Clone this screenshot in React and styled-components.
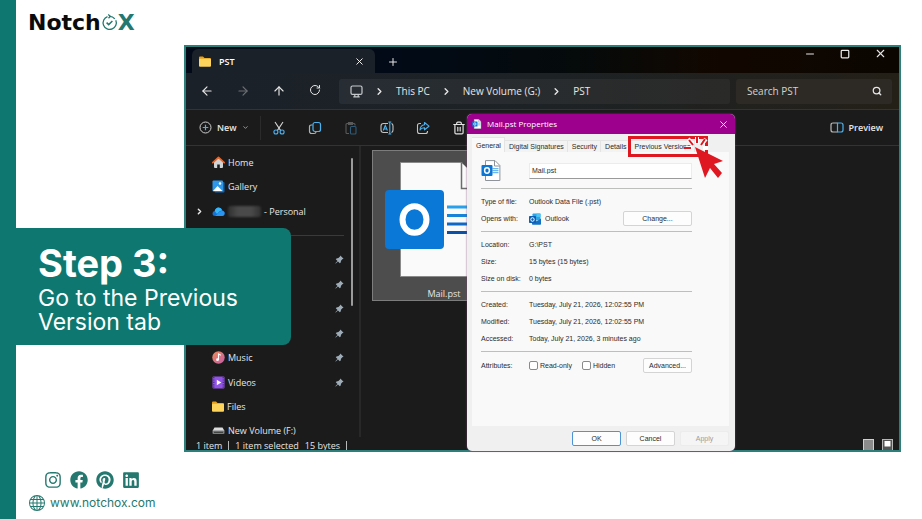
import styled, { createGlobalStyle, ThemeProvider } from 'styled-components'
import { ArrowLeft, ArrowRight, ArrowUp, RotateCw, X, Plus, Minus, Square, Search, ChevronRight, ChevronDown, Trash2 } from 'lucide-react'
import { FaInstagram, FaFacebook, FaPinterest, FaLinkedin } from 'react-icons/fa'
import { BsGlobe } from 'react-icons/bs'

const GlobalStyle = createGlobalStyle`
  * {
    box-sizing: border-box;
  }
  body {
    margin: 0;
    background-color: white;
  }
  button, input {
    font: inherit;
    color: inherit;
  }
  button {
    background: none;
    border: none;
    padding: 0;
  }
  svg {
    display: block;
    flex: none;
  }
`

const theme = {
  brand: '#0e776f',
  brandSoft: '#25786f',
  winBg: '#1b1b1b',
  winLine: '#323334',
  winText: '#e6e6e6',
  blue: '#4cb2ef',
  panel: '#f9f9f9',
  dialogText: '#2b2b2b',
  highlight: '#df1720',
  uiFont: '"Open Sans", "Noto Sans", sans-serif',
  dialogFont: '"Liberation Sans", Arial, sans-serif',
  brandFont: '"Inter", "Open Sans", sans-serif',
}

const Page = styled.div`
  min-height: 100vh;
  border-left: 16px solid ${props => props.theme.brand};
  font-family: ${props => props.theme.brandFont};
`;

const Header = styled.header`
  display: flex;
  align-items: center;
  height: 45px;
  padding-left: 12px;
`;

const Logo = styled.a`
  display: flex;
  align-items: center;
  font-family: "DejaVu Sans", sans-serif;
  font-size: 22px;
  line-height: 20px;
  font-weight: 700;
  color: #0b0b0b;
  text-decoration: none;
`;

const LogoAccent = styled.span`
  color: ${props => props.theme.brandSoft};
`;

const Stage = styled.main`
  position: relative;
  padding: 0 21px 0 168px;
`;

const Callout = styled.section`
  position: absolute;
  top: 183px;
  left: 0;
  width: 275px;
  padding: 12px 21px 11px 22px;
  border-radius: 0 8px 8px 0;
  background-color: ${props => props.theme.brand};
  color: white;
`;

const CalloutTitle = styled.h1`
  margin: 0;
  font-size: 38px;
  line-height: 46px;
  font-weight: 700;
`;

const CalloutText = styled.p`
  margin: 0;
  font-size: 23px;
  line-height: 24px;
`;

const Window = styled.section`
  position: relative;
  border: 2px solid #2c807b;
  background-color: ${props => props.theme.winBg};
  color: ${props => props.theme.winText};
  font-family: ${props => props.theme.uiFont};
  font-size: 9px;
`;

const TitleBar = styled.div`
  display: flex;
  align-items: flex-end;
  height: 26px;
  padding-left: 6px;
  background: linear-gradient(90deg, #020a19 0%, #020a17 30%, #050a0a 55%, #120700 75%, #0b0600 100%);
`;

const WindowTab = styled.div`
  display: flex;
  align-items: center;
  gap: 8px;
  width: 183px;
  height: 24px;
  padding: 0 10px 0 7px;
  border-radius: 6px 6px 0 0;
  background-color: #1b2129;
  font-weight: 600;
  color: white;
  button {
    margin-left: auto;
  }
`;

const NewTab = styled.button`
  align-self: center;
  padding: 4px 12px 0;
`;

const WindowControls = styled.div`
  display: flex;
  align-self: flex-start;
  gap: 24px;
  margin-left: auto;
  padding: 0 12px 0 0;
`;

const NavBar = styled.nav`
  display: flex;
  align-items: center;
  gap: 6px;
  height: 37px;
  padding: 0 7px 0 3px;
  border-bottom: 1px solid ${props => props.theme.winLine};
  background: linear-gradient(90deg, #1a2129 0%, #1d2225 50%, #242018 100%);
`;

const NavButtons = styled.div`
  display: flex;
`;

const NavButton = styled.button`
  display: flex;
  justify-content: center;
  width: 36px;
  opacity: ${props => props.disabled ? 0.4 : 1};
`;

const Breadcrumbs = styled.div`
  display: flex;
  align-items: center;
  flex: 1;
  gap: 11px;
  height: 25px;
  padding-left: 11px;
  border-radius: 3px;
  background: linear-gradient(90deg, #272d34, #2a2a28);
  font-size: 10px;
`;

const SearchBox = styled.label`
  display: flex;
  align-items: center;
  width: 156px;
  height: 25px;
  padding: 0 10px 0 11px;
  border-radius: 3px;
  background-color: #2d2a25;
  font-size: 10px;
  input {
    flex: 1;
    min-width: 0;
    padding: 0;
    border: none;
    background: none;
  }
  input::placeholder {
    color: #d2d2d0;
    opacity: 1;
  }
`;

const Toolbar = styled.div`
  display: flex;
  align-items: center;
  height: 36px;
  padding: 0 16px 0 13px;
  border-bottom: 1px solid ${props => props.theme.winLine};
`;

const TextButton = styled.button`
  display: flex;
  align-items: center;
  gap: 5px;
  font-weight: 600;
`;

const ToolDivider = styled.span`
  width: 1px;
  height: 24px;
  margin-left: 11px;
  background-color: #2b2b2b;
`;

const Tools = styled.div`
  display: flex;
  flex: 1;
  gap: 22px;
  padding-left: 11px;
`;

const Body = styled.div`
  display: flex;
  height: 291px;
  overflow: hidden;
`;

const Sidebar = styled.aside`
  display: flex;
  width: 175px;
  border-right: 2px solid #282828;
`;

const Places = styled.ul`
  display: flex;
  flex-direction: column;
  flex: 1;
  height: 293px;
  margin: 4px 0 0;
  padding: 0 7px 0 9px;
  list-style: none;
`;

const Place = styled.li`
  display: flex;
  align-items: center;
  flex: 1;
  gap: 3px;
  > svg:last-child {
    margin-left: auto;
  }
`;

const PlaceArrow = styled.span`
  width: 14px;
`;

const PlaceDivider = styled.li`
  display: flex;
  align-items: center;
  flex: 1;
  &::after {
    content: '';
    flex: 1;
    height: 1px;
    background-color: #3a3a3a;
  }
`;

const Redacted = styled.span`
  width: 33px;
  height: 11px;
  border-radius: 2px;
  background: linear-gradient(90deg, #303030, #4a4a4a 30%, #4a4a4a 70%, #303030);
  filter: blur(1px);
`;

const Scrollbar = styled.div`
  width: 2px;
  height: 148px;
  margin: 12px 6px 0 0;
  border-radius: 1px;
  background-color: #9c9c9c;
`;

const Files = styled.div`
  flex: 1;
  padding: 4px 11px;
`;

const FileTile = styled.figure`
  width: 144px;
  height: 151px;
  margin: 0;
  padding-top: 11px;
  border: 1px solid #7d7d7d;
  background-color: #4d4d4d;
  text-align: center;
  font-size: 9px;
  svg {
    margin-left: 12px;
  }
  figcaption {
    line-height: 14px;
    padding-top: 9px;
  }
`;

const StatusBar = styled.footer`
  display: flex;
  align-items: center;
  height: 13px;
  padding: 3px 6px 0 10px;
  gap: 6px;
  overflow: hidden;
  line-height: 13px;
`;

const StatusDivider = styled.span`
  width: 1px;
  height: 9px;
  background-color: #b8b8b8;
`;

const ViewIcons = styled.span`
  display: flex;
  gap: 8px;
  margin-left: auto;
`;

const Dialog = styled.section`
  position: absolute;
  top: 67px;
  left: 281px;
  width: 268px;
  border-radius: 5px;
  background-color: #f0f0f0;
  box-shadow: 0 0 2px #7a4a78;
  color: ${props => props.theme.dialogText};
  font-family: ${props => props.theme.dialogFont};
  font-size: 7px;
`;

const DialogTitle = styled.header`
  display: flex;
  align-items: center;
  gap: 5px;
  height: 20px;
  padding: 0 6px 0 5px;
  border-radius: 5px 5px 0 0;
  background-color: #9c008c;
  color: white;
  h2 {
    flex: 1;
    margin: 0;
    font-family: ${props => props.theme.uiFont};
    font-size: 8px;
    line-height: 10px;
    font-weight: 400;
  }
`;

const DialogTabs = styled.div`
  display: flex;
  align-items: flex-end;
  height: 18px;
  padding-left: 5px;
`;

const DialogTab = styled.button`
  height: ${props => props.$active ? 15 : 12}px;
  padding: 0 3px 0 4px;
  border: 1px solid #e4e4e4;
  border-width: 1px 1px 0 0;
  background-color: ${props => props.$active ? props.theme.panel : '#f3f3f3'};
  white-space: nowrap;
`;

const Panel = styled.div`
  min-height: 274px;
  margin: 0 6px 0 5px;
  padding: 1px 37px 0 9px;
  background-color: ${props => props.theme.panel};
`;

const Group = styled.div`
  padding: ${props => props.$last ? 5 : 4}px 0 4px;
  border-bottom: ${props => props.$last ? 'none' : '1px solid #bcbfbc'};
`;

const Field = styled.div`
  display: flex;
  align-items: center;
  height: ${props => props.$tall ? 27 : 17}px;
`;

const FieldName = styled.span`
  width: 48px;
`;

const FieldValue = styled.span`
  display: flex;
  align-items: center;
  flex: 1;
  gap: 4px;
`;

const NameInput = styled.input`
  flex: 1;
  min-width: 0;
  height: 16px;
  padding: 0 2px;
  border: 1px solid #ececec;
  border-bottom-color: #9a9a9a;
  background-color: white;
`;

const Check = styled.label`
  display: flex;
  align-items: center;
  gap: 2px;
  margin-right: 10px;
  input {
    appearance: none;
    width: 9px;
    height: 9px;
    margin: 0;
    border: 1px solid #8a8a8a;
    border-radius: 2px;
    background-color: white;
  }
`;

const DialogButton = styled.button`
  width: ${props => props.$wide ? 69 : 49}px;
  height: 15px;
  border: 1px solid ${props => props.$primary ? '#4d94d6' : '#d4d4d4'};
  border-radius: 2px;
  background-color: #fdfdfd;
  &:disabled {
    border-color: #ececec;
    background-color: #f5f5f5;
    color: #9c9c9c;
  }
`;

const DialogFooter = styled.footer`
  display: flex;
  justify-content: flex-end;
  gap: 5px;
  padding: 5px 6px;
`;

const Highlight = styled.div`
  position: absolute;
  top: 22px;
  left: 161px;
  width: 80px;
  height: 21px;
  border: 3px solid ${props => props.theme.highlight};
`;

const Pointer = styled.svg`
  position: absolute;
  top: 21px;
  left: 215px;
`;

const Footer = styled.footer`
  display: flex;
  flex-direction: column;
  gap: 6px;
  padding: 19px 13px 7px;
  color: ${props => props.theme.brandSoft};
`;

const Social = styled.div`
  display: flex;
  gap: 8px;
  padding-left: 15px;
  a {
    color: inherit;
  }
`;

const Website = styled.a`
  display: flex;
  align-items: center;
  gap: 5px;
  color: inherit;
  font-size: 12px;
  line-height: 16px;
  text-decoration: none;
`;

const FolderIcon = () => (
  <svg width="12" height="11" viewBox="0 0 12 11">
    <path d="M0 1.5Q0 .5 1 .5h3l1.5 1.5H11q1 0 1 1V4H0z" fill="#e8a019" />
    <rect y="2.8" width="12" height="8" rx="1" fill="#ffd45c" />
  </svg>
)

const PcIcon = () => (
  <svg width="13" height="13" viewBox="0 0 13 13" fill="none" stroke="#c8cbce" strokeWidth="1.2">
    <rect x="1" y="1" width="11" height="8.4" rx="1.5" />
    <path d="M4.8 9.5v2M8.2 9.5v2M3.3 11.8h6.4" />
  </svg>
)

const AddIcon = () => (
  <svg width="13" height="13" viewBox="0 0 13 13" fill="none">
    <circle cx="6.5" cy="6.5" r="5.5" stroke="#d0d0d0" />
    <path d="M6.5 3.7v5.6M3.7 6.5h5.6" stroke="#4cb2ef" strokeWidth="1.2" />
  </svg>
)

const CutIcon = () => (
  <svg width="14" height="14" viewBox="0 0 14 14" fill="none" strokeWidth="1.1">
    <path d="M3 1l5.7 8.6M11 1L5.3 9.6" stroke="#d6d6d6" />
    <circle cx="3.9" cy="11" r="2" stroke="#4cb2ef" />
    <circle cx="10.1" cy="11" r="2" stroke="#4cb2ef" />
  </svg>
)

const CopyIcon = () => (
  <svg width="14" height="14" viewBox="0 0 14 14" fill="none" strokeWidth="1.2">
    <path d="M4.5 4H3.2Q1.5 4 1.5 5.7v4.6Q1.5 12.5 3.7 12.5H6Q8 12.5 8 11" stroke="#a9b4ba" />
    <rect x="5" y="1.5" width="7.5" height="9" rx="2" stroke="#4cb2ef" />
  </svg>
)

const PasteIcon = () => (
  <svg width="14" height="14" viewBox="0 0 14 14" fill="none" strokeWidth="1.1">
    <path d="M5 12.5H3Q2 12.5 2 11.5V3.5Q2 2.5 3 2.5h7q1 0 1 1V4.5M4.5 2.5V1.5h4v2h-4z" stroke="#5a5a5a" />
    <rect x="6.5" y="5.5" width="5.5" height="7.5" rx="1" stroke="#2f5b78" />
  </svg>
)

const RenameIcon = () => (
  <svg width="14" height="14" viewBox="0 0 14 14" fill="none" strokeWidth="1.1">
    <path d="M8 2.5H3.5Q1 2.5 1 5v4q0 2.5 2.5 2.5H8M11.5 2.5Q13 3 13 5v4q0 2-1.5 2.5" stroke="#c4c4c4" />
    <path d="M9.8 1.5v11M8.3 1h3M8.3 13h3M3.2 9.5L5.3 4.5l2.1 5M3.9 8h2.8" stroke="#4cb2ef" />
  </svg>
)

const ShareIcon = () => (
  <svg width="14" height="14" viewBox="0 0 14 14" fill="none" strokeWidth="1.1" strokeLinejoin="round">
    <path d="M5 2.5H3.5Q1.5 2.5 1.5 4.5v6q0 2 2 2h6q2 0 2-2V10" stroke="#c4c4c4" />
    <path d="M8.5 1.5l4.5 3.7-4.5 3.6V6.7Q5.5 6.5 4 9q.3-4.8 4.5-5.3z" stroke="#4cb2ef" />
  </svg>
)

const PreviewIcon = () => (
  <svg width="14" height="11" viewBox="0 0 14 11" fill="none" strokeWidth="1.2">
    <path d="M7.5 1H3Q1 1 1 3v5q0 2 2 2h4.5" stroke="#b9b9b9" />
    <path d="M7.5 1H11q2 0 2 2v5q0 2-2 2H7.5z" stroke="#4cb2ef" />
  </svg>
)

const HomeIcon = () => (
  <svg width="13" height="13" viewBox="0 0 13 13">
    <path d="M2 6l4.5-4L11 6v5q0 1-1 1H7.8V8.5H5.2V12H3q-1 0-1-1z" fill="#cfd3d6" />
    <path d="M.8 6.6L6.5 1.3l5.7 5.3" fill="none" stroke="#e8672c" strokeWidth="1.7" strokeLinecap="round" strokeLinejoin="round" />
  </svg>
)

const GalleryIcon = () => (
  <svg width="13" height="13" viewBox="0 0 13 13">
    <rect x="2.5" y="2" width="10" height="10.5" rx="1" fill="#1262b3" />
    <rect x=".5" y=".5" width="10.5" height="11" rx="1" fill="#2f97ea" />
    <path d="M1 11l4.5-5L10.5 11z" fill="white" />
    <circle cx="8" cy="3.5" r="1.2" fill="white" />
  </svg>
)

const CloudIcon = () => (
  <svg width="13" height="13" viewBox="0 0 13 13">
    <path d="M3.2 11Q.5 11 .5 8.5.5 6.3 2.7 6 3.5 2.5 6.7 2.5q2.6 0 3.5 2.7Q12.6 5.6 12.6 8.2 12.5 11 9.8 11z" fill="#1272d8" />
    <path d="M2.7 6Q3.5 2.5 6.7 2.5q2.6 0 3.5 2.7Q7.5 5.5 5 9z" fill="#38b5f5" />
    <path d="M3.5 11l4-4q2.5-2 4.9 0 .7 4-2.6 4z" fill="#2a96f2" />
  </svg>
)

const MusicIcon = () => (
  <svg width="13" height="13" viewBox="0 0 13 13">
    <defs>
      <linearGradient id="music" x2="1" y2="1">
        <stop stopColor="#f08a52" />
        <stop offset="1" stopColor="#c45cae" />
      </linearGradient>
    </defs>
    <circle cx="6.5" cy="6.5" r="6.2" fill="url(#music)" />
    <circle cx="5.5" cy="8.7" r="1.4" fill="white" />
    <path d="M6.5 8.7V3l2.3 1.3" fill="none" stroke="white" strokeWidth="1.1" />
  </svg>
)

const VideoIcon = () => (
  <svg width="13" height="13" viewBox="0 0 13 13">
    <rect x=".5" y=".5" width="12" height="12" rx="1" fill="#9153e6" />
    <path d="M1.8 1v11M11.2 1v11" stroke="#4b1f96" strokeWidth="1.2" strokeDasharray="1.2 1.2" />
    <path d="M4.8 3.8v5.4l4.5-2.7z" fill="white" />
  </svg>
)

const DriveIcon = () => (
  <svg width="13" height="13" viewBox="0 0 13 13">
    <path d="M2.5 3.5h8L12.5 7H.5z" fill="#dcdcdc" />
    <rect x=".5" y="6.5" width="12" height="3.5" rx="1" fill="#7b7f80" />
    <rect x="2" y="7.8" width="9" height="1" fill="#333" />
  </svg>
)

const PinIcon = () => (
  <svg width="9" height="9" viewBox="0 0 9 9">
    <path d="M5.3.4l3.3 3.3-1 .4L6 5.7 5.7 7.5l-.9.8L3 6.5.8 8.6.3 8.2 2.5 5.9.8 4.2l.7-.8L3.4 3 5 1.4z" fill="#9fadb8" />
  </svg>
)

const OutlookFile = ({ size }) => (
  <svg width={size} height={size} viewBox="0 0 20 21">
    <path d="M4 .6h9.5L18.4 5.5v15H4z" fill="white" stroke="#8e9499" />
    <path d="M13 .8V6h5.2" fill="none" stroke="#8e9499" />
    <path d="M11 8.7h6M11 10.7h6M11 12.7h6" stroke="#4aa5ea" />
    <rect y="5" width="11" height="11" rx="1" fill="#0b76d4" />
    <ellipse cx="5.500" cy="10.5" rx="2.4" ry="2.700" fill="none" stroke="white" strokeWidth="1.5" />
  </svg>
)

const OutlookApp = () => (
  <svg width="12" height="12" viewBox="0 0 12 12">
    <rect x="3.5" y=".5" width="8" height="7" rx=".8" fill="#2aa5e8" />
    <path d="M7.5.5h4v3.5h-4z" fill="#4cc5f5" />
    <path d="M3 5.5l4.8 2.8L12 5.5v5.5q0 .8-.8.8H3.8Q3 11.8 3 11z" fill="#1270c4" />
    <rect y="3" width="7" height="7" rx=".7" fill="#0b5fb5" />
    <ellipse cx="3.5" cy="6.5" rx="1.7" ry="1.8" fill="none" stroke="white" strokeWidth="1" />
  </svg>
)

const LargeFile = () => (
  <svg width="120" height="116" viewBox="0 0 120 116">
    <path d="M15.5.5H77L104 27.5v87H15.5z" fill="#fafafa" stroke="#8a8a8a" />
    <path d="M76.5.5v26h27" fill="#fafafa" stroke="#6b6b6b" strokeWidth="1.5" />
    <path d="M76.5.5h27v26z" fill="#4d4d4d" />
    <path d="M62 45h34" stroke="#28a0ea" strokeWidth="3" />
    <path d="M62 53.5h34" stroke="#1683d8" strokeWidth="3" />
    <path d="M62 62h34" stroke="#0f68c4" strokeWidth="3" />
    <path d="M62 70.5h34" stroke="#0b4fa6" strokeWidth="3" />
    <rect y="28" width="59" height="59" rx="4" fill="#0a78d7" />
    <ellipse cx="29.5" cy="57.5" rx="12" ry="13.3" fill="none" stroke="white" strokeWidth="6" />
  </svg>
)

const ClockMark = () => (
  <svg width="17" height="17" viewBox="0 0 17 17" fill="none" stroke="#25786f" strokeWidth="1.3">
    <path d="M6.5 2.6A6.6 6.6 0 1 0 14.8 6.2" />
    <path d="M8.5 2.3A6.6 6.6 0 0 1 13.8 4.8" />
    <path d="M7.2.6L9.3 2.3 7.5 4.2" />
    <path d="M5.6 8.6l2.1 2L11.4 7" strokeWidth="1.5" />
  </svg>
)

const ListViewIcon = () => (
  <svg width="11" height="12" viewBox="0 0 11 12">
    <rect x=".5" y=".5" width="10" height="11" fill="#8b8b8b" stroke="#cfcfcf" />
  </svg>
)

const TileViewIcon = () => (
  <svg width="11" height="12" viewBox="0 0 11 12">
    <rect x=".5" y=".5" width="10" height="11" fill="#555" stroke="#b5b5b5" />
    <rect x="2.5" y="2" width="6" height="5.5" fill="white" />
  </svg>
)

const places = [
  { name: 'Home', Icon: HomeIcon },
  { name: 'Gallery', Icon: GalleryIcon },
  { name: '- Personal', Icon: CloudIcon, account: true },
  { divider: true },
  { pinned: true },
  { pinned: true },
  { pinned: true },
  { pinned: true },
  { name: 'Music', Icon: MusicIcon, pinned: true },
  { name: 'Videos', Icon: VideoIcon, pinned: true },
  { name: 'Files', Icon: FolderIcon },
  { name: 'New Volume (F:)', Icon: DriveIcon },
]

const details = [
  [['Location:', 'G:\\PST'], ['Size:', '15 bytes (15 bytes)'], ['Size on disk:', '0 bytes']],
  [['Created:', 'Tuesday, July 21, 2026, 12:02:55 PM'], ['Modified:', 'Tuesday, July 21, 2026, 12:02:55 PM'], ['Accessed:', 'Today, July 21, 2026, 3 minutes ago']],
]

function PropertiesDialog() {
  return (
    <Dialog>
      <DialogTitle>
        <OutlookFile size={10} />
        <h2>Mail.pst Properties</h2>
        <button aria-label="Close properties"><X size={11} /></button>
      </DialogTitle>
      <DialogTabs>
        <DialogTab $active>General</DialogTab>
        <DialogTab>Digital Signatures</DialogTab>
        <DialogTab>Security</DialogTab>
        <DialogTab>Details</DialogTab>
        <DialogTab>Previous Versions</DialogTab>
      </DialogTabs>
      <Panel>
        <Group>
          <Field as="label" $tall>
            <FieldName><OutlookFile size={21} /></FieldName>
            <NameInput aria-label="File name" defaultValue="Mail.pst" />
          </Field>
        </Group>
        <Group>
          <Field>
            <FieldName>Type of file:</FieldName>
            <FieldValue>Outlook Data File (.pst)</FieldValue>
          </Field>
          <Field>
            <FieldName>Opens with:</FieldName>
            <FieldValue><OutlookApp /> Outlook</FieldValue>
            <DialogButton $wide>Change...</DialogButton>
          </Field>
        </Group>
        {details.map((rows, i) => (
          <Group key={i}>
            {rows.map(([name, value]) => (
              <Field key={name}>
                <FieldName>{name}</FieldName>
                <FieldValue>{value}</FieldValue>
              </Field>
            ))}
          </Group>
        ))}
        <Group $last>
          <Field>
            <FieldName>Attributes:</FieldName>
            <Check><input type="checkbox" />Read-only</Check>
            <FieldValue><Check><input type="checkbox" />Hidden</Check></FieldValue>
            <DialogButton>Advanced...</DialogButton>
          </Field>
        </Group>
      </Panel>
      <DialogFooter>
        <DialogButton $primary>OK</DialogButton>
        <DialogButton>Cancel</DialogButton>
        <DialogButton disabled>Apply</DialogButton>
      </DialogFooter>
      <Highlight />
      <Pointer width="42" height="46" viewBox="0 0 42 46">
        <path d="M4 13h6M6 4l5 5M15 2v7M24 4l-5 6M21 13h5" stroke="white" strokeWidth="4" />
        <path d="M2 13h7M7 5l4 5M15 2v6M23 4l-4 6" stroke="#df1720" strokeWidth="2" />
        <path d="M13 12l28 14-9 3 8 9-4 5-8-10-5 10z" fill="#df1720" />
      </Pointer>
    </Dialog>
  )
}

function Explorer() {
  return (
    <Window>
      <TitleBar>
        <WindowTab>
          <FolderIcon />
          PST
          <button aria-label="Close tab"><X size={11} /></button>
        </WindowTab>
        <NewTab aria-label="New tab"><Plus size={12} /></NewTab>
        <WindowControls>
          <button aria-label="Minimize"><Minus size={12} /></button>
          <button aria-label="Maximize"><Square size={10} strokeWidth={3} /></button>
          <button aria-label="Close"><X size={13} /></button>
        </WindowControls>
      </TitleBar>
      <NavBar>
        <NavButtons>
          <NavButton aria-label="Back"><ArrowLeft size={14} /></NavButton>
          <NavButton aria-label="Forward" disabled><ArrowRight size={14} /></NavButton>
          <NavButton aria-label="Up"><ArrowUp size={14} /></NavButton>
          <NavButton aria-label="Refresh"><RotateCw size={12} /></NavButton>
        </NavButtons>
        <Breadcrumbs>
          <PcIcon />
          <ChevronRight size={11} strokeWidth={3} />
          <span>This PC</span>
          <ChevronRight size={11} strokeWidth={3} />
          <span>New Volume (G:)</span>
          <ChevronRight size={11} strokeWidth={3} />
          <span>PST</span>
        </Breadcrumbs>
        <SearchBox>
          <input aria-label="Search" placeholder="Search PST" />
          <Search size={10} strokeWidth={3} />
        </SearchBox>
      </NavBar>
      <Toolbar>
        <TextButton><AddIcon /> New <ChevronDown size={7} /></TextButton>
        <ToolDivider />
        <Tools>
          <button aria-label="Cut"><CutIcon /></button>
          <button aria-label="Copy"><CopyIcon /></button>
          <button aria-label="Paste" disabled><PasteIcon /></button>
          <button aria-label="Rename"><RenameIcon /></button>
          <button aria-label="Share"><ShareIcon /></button>
          <button aria-label="Delete"><Trash2 size={14} /></button>
        </Tools>
        <TextButton><PreviewIcon /> Preview</TextButton>
      </Toolbar>
      <Body>
        <Sidebar>
          <Places>
            {places.map(({ name, Icon, account, divider, pinned }, i) => divider ? <PlaceDivider key={i} /> : (
              <Place key={i}>
                <PlaceArrow>{account && <ChevronRight size={9} strokeWidth={4} />}</PlaceArrow>
                {Icon && <Icon />}
                {account && <Redacted />}
                <span>{name}</span>
                {pinned && <PinIcon />}
              </Place>
            ))}
          </Places>
          <Scrollbar />
        </Sidebar>
        <Files>
          <FileTile>
            <LargeFile />
            <figcaption>Mail.pst</figcaption>
          </FileTile>
        </Files>
      </Body>
      <StatusBar>
        <span>1 item</span>
        <StatusDivider />
        <span>1 item selected</span>
        <span>15 bytes</span>
        <StatusDivider />
        <ViewIcons>
          <ListViewIcon />
          <TileViewIcon />
        </ViewIcons>
      </StatusBar>
      <PropertiesDialog />
    </Window>
  )
}

function App() {
  return (
    <ThemeProvider theme={theme}>
      <GlobalStyle />
      <Page>
        <Header>
          <Logo href="#">
            Notch<ClockMark /><LogoAccent>X</LogoAccent>
          </Logo>
        </Header>
        <Stage>
          <Explorer />
          <Callout>
            <CalloutTitle>Step 3:</CalloutTitle>
            <CalloutText>Go to the Previous Version tab</CalloutText>
          </Callout>
        </Stage>
        <Footer>
          <Social>
            <a href="#" aria-label="Instagram"><FaInstagram size={18} /></a>
            <a href="#" aria-label="Facebook"><FaFacebook size={18} /></a>
            <a href="#" aria-label="Pinterest"><FaPinterest size={18} /></a>
            <a href="#" aria-label="LinkedIn"><FaLinkedin size={18} /></a>
          </Social>
          <Website href="#"><BsGlobe size={16} /> www.notchox.com</Website>
        </Footer>
      </Page>
    </ThemeProvider>
  );
}

export default App;
